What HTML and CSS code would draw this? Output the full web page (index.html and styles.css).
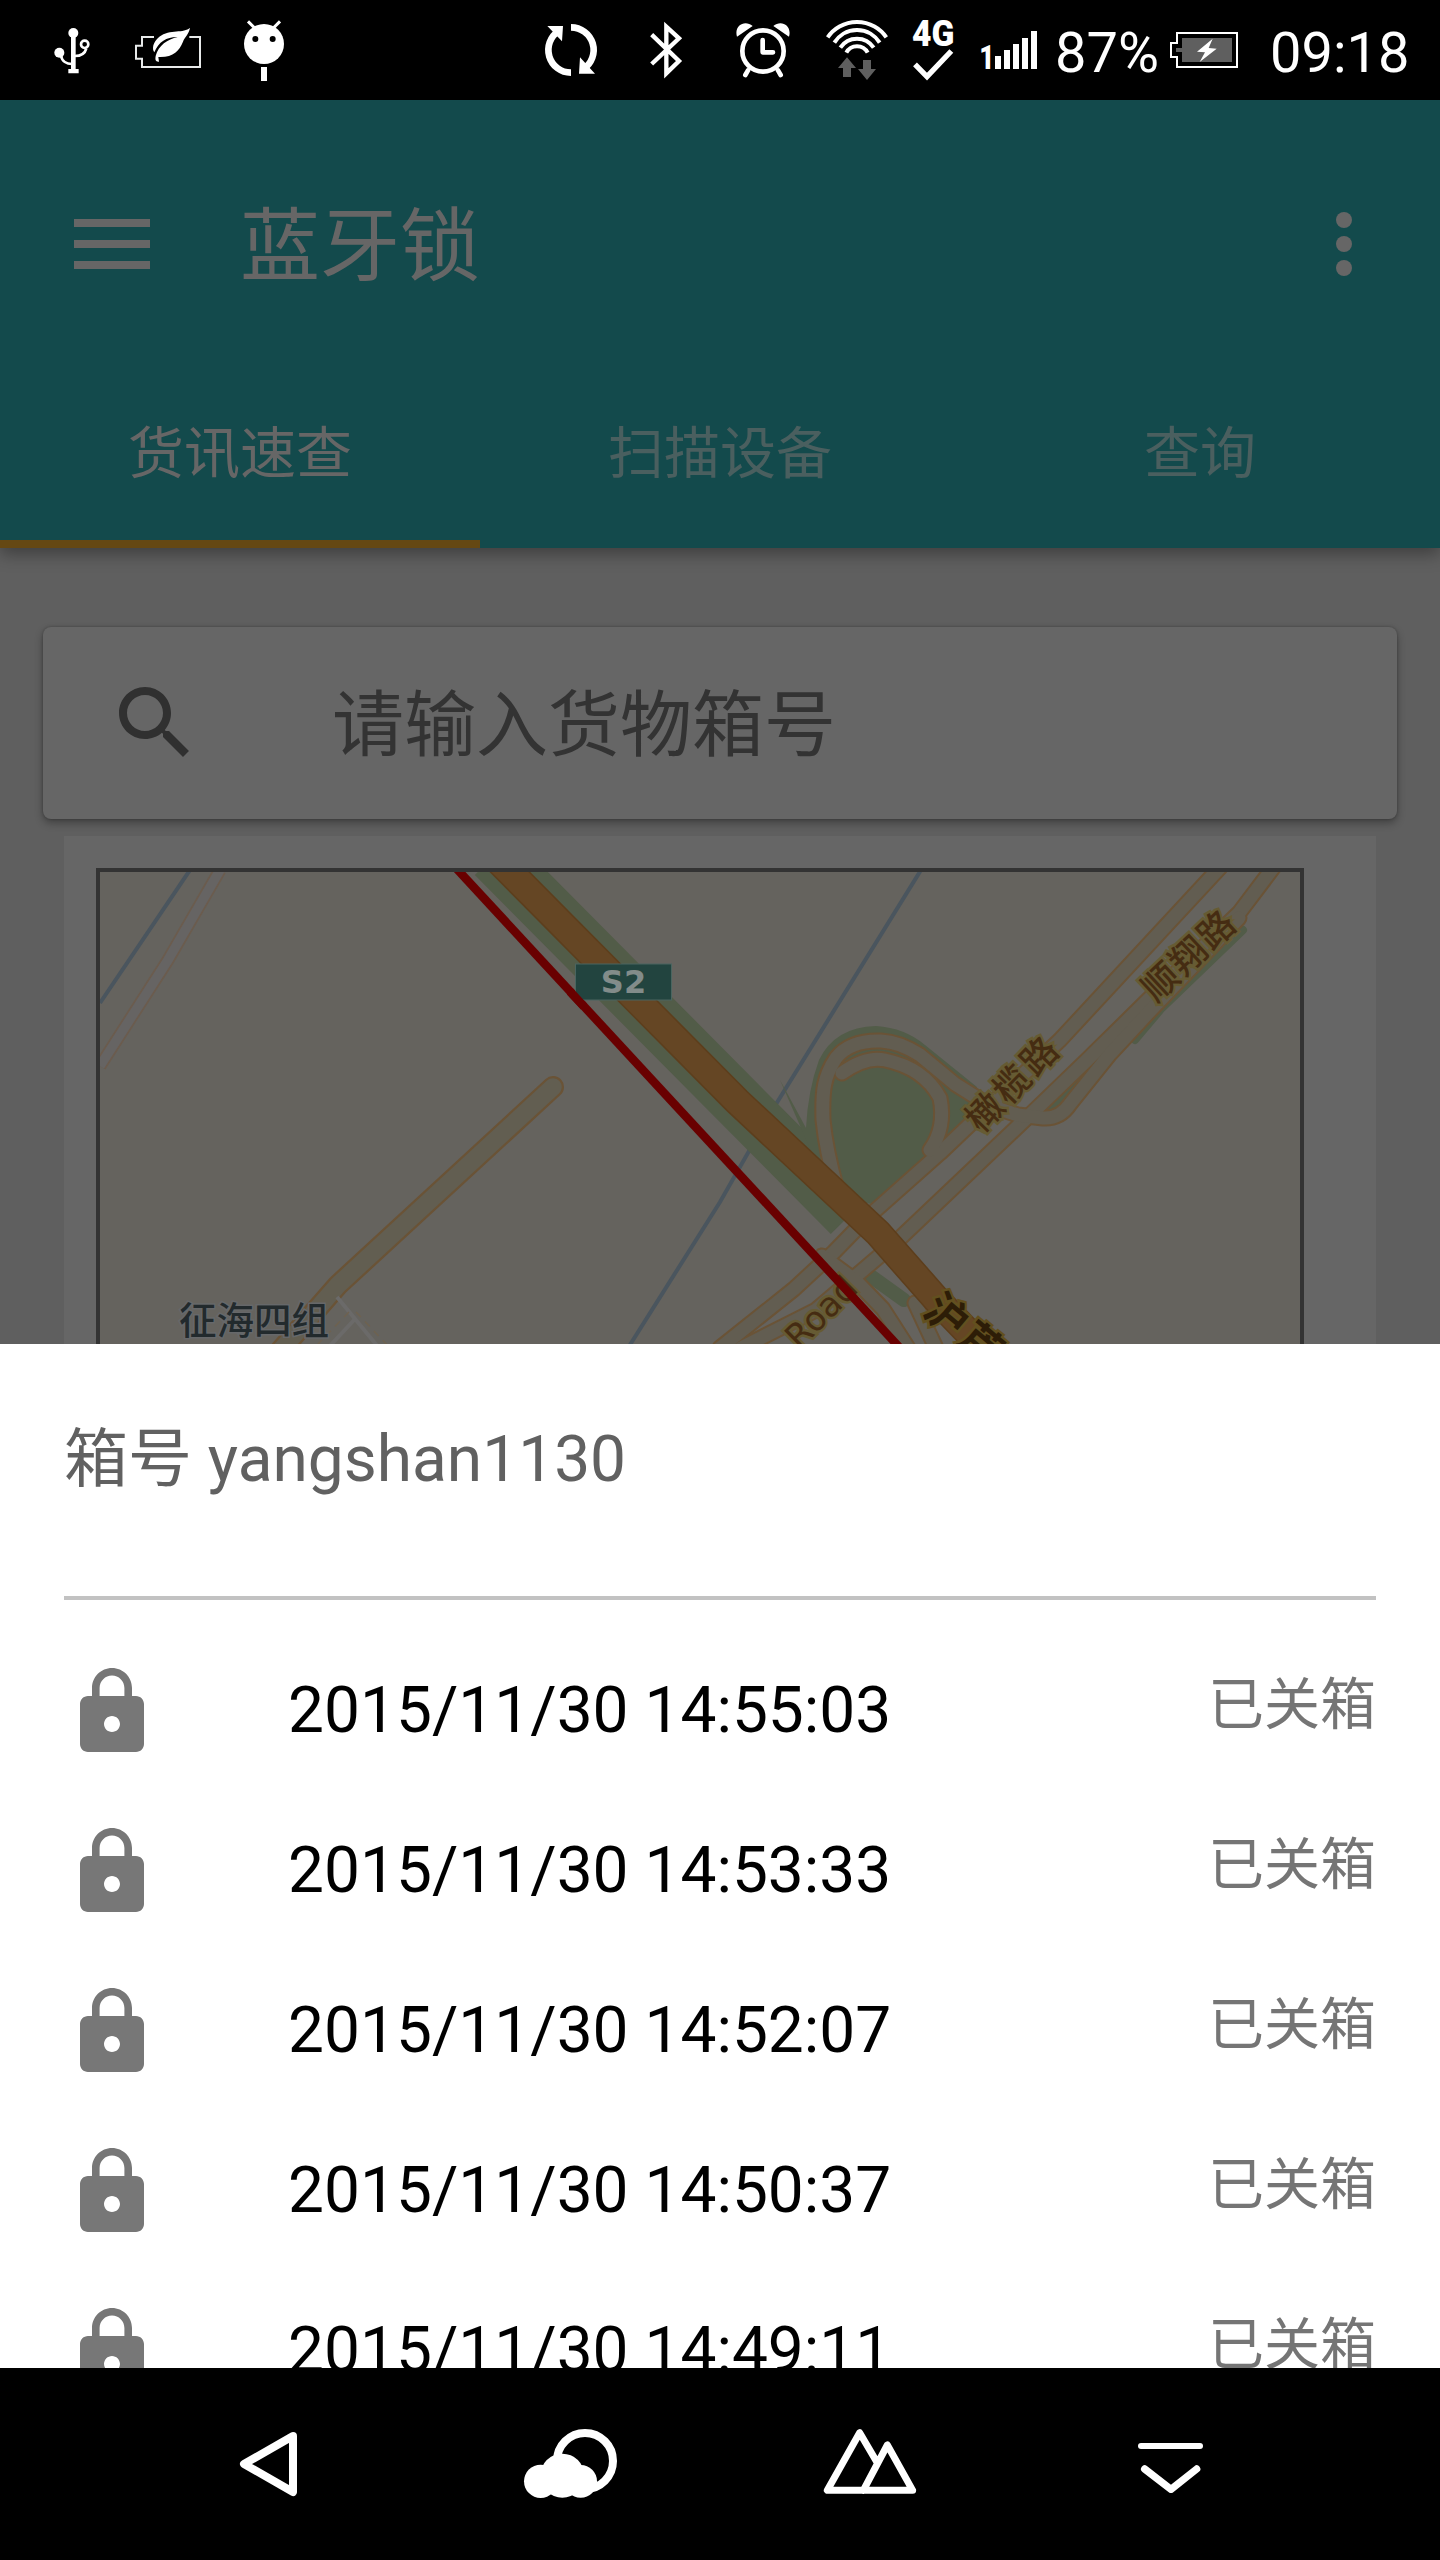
FILE: index.html
```html
<!DOCTYPE html>
<html lang="zh-CN">
<head>
<meta charset="utf-8">
<title>蓝牙锁</title>
<link rel="stylesheet" href="styles.css">
</head>
<body>
<svg class="defs" width="0" height="0" aria-hidden="true">
  <symbol id="lock" viewBox="0 0 24 24"><path d="M18 8h-1V6c0-2.76-2.24-5-5-5S7 3.24 7 6v2H6c-1.1 0-2 .9-2 2v10c0 1.1.9 2 2 2h12c1.1 0 2-.9 2-2V10c0-1.1-.9-2-2-2zm-6 9c-1.1 0-2-.9-2-2s.9-2 2-2 2 .9 2 2-.9 2-2 2zm3.1-9H8.9V6c0-1.71 1.39-3.1 3.1-3.1s3.1 1.39 3.1 3.1v2z"/></symbol>
</svg>
<div class="screen">
  <header class="status">
    <svg width="110" height="100" viewBox="0 0 330 300" fill="#fff">
      <circle cx="220" cy="99" r="15"/><circle cx="178" cy="158" r="15"/>
      <path d="M213 99h14v108h9v13h-31v-13h8z"/>
      <g fill="none" stroke="#fff" stroke-width="8"><circle cx="254" cy="133" r="11"/><path d="M183 167C186 184 200 192 216 192M259 145C255 161 241 168 224 168"/></g>
    </svg>
    <svg width="110" height="100" viewBox="330 0 330 300">
      <path d="M462 111H426V137H408V176H426V201H600V111H568" fill="none" stroke="#e8eaea" stroke-width="6"/>
      <path fill="#fff" d="M570 83C552 101 510 86 478 110C457 127 456 148 463 157C476 124 502 110 533 111C503 118 475 136 467 168C465 180 467 186 477 185L475 171C520 173 537 153 549 125C554 111 567 102 570 83z"/>
    </svg>
    <svg width="280" height="100" viewBox="660 0 840 300" fill="#fff">
      <circle cx="792" cy="132" r="60"/><path d="M744 64L770 90M840 64L814 90" stroke="#fff" stroke-width="9"/>
      <circle cx="766" cy="117" r="9" fill="#000"/><circle cx="818" cy="117" r="9" fill="#000"/><path d="M783 201h18v42h-18z"/>
    </svg>
    <svg width="120" height="100" viewBox="0 0 360 300" fill="#fff">
      <path d="M213 82A68 68 0 0 1 250 207M213 218A68 68 0 0 1 176 93" fill="none" stroke="#fff" stroke-width="20"/>
      <path d="M240 172L285 221H237zM142 78H189L186 124z"/>
    </svg>
    <svg width="90" height="100" viewBox="360 0 270 300">
      <path d="M455 104L537 183L499 220V80L537 115L455 192" fill="none" stroke="#fff" stroke-width="13"/>
    </svg>
    <svg width="100" height="100" viewBox="630 0 300 300">
      <g fill="none" stroke="#fff" stroke-width="14" stroke-linecap="round" stroke-linejoin="round"><circle cx="789" cy="153" r="62"/><path d="M788 120V157H819M744 211L736 225M834 211L842 225"/></g>
      <path fill="#fff" d="M711 110C701 76 735 58 758 78zM867 110C877 76 843 58 820 78z"/>
    </svg>
    <svg width="90" height="100" viewBox="930 0 270 300">
      <path d="M983 112A107 107 0 0 1 1159 112M1003 128A80 80 0 0 1 1139 128M1021 143A60 60 0 0 1 1121 143M1039 158A36 36 0 0 1 1103 158" fill="none" stroke="#fff" stroke-width="12"/>
      <path fill="#5f5f5f" d="M1041 172L1068 204H1053V231H1029V204H1014zM1089 180H1113V207H1128L1101 240L1074 207H1089z"/>
    </svg>
    <svg width="60" height="100" viewBox="1200 0 180 300">
      <text class="glyph" x="1236" y="138" font-size="108" font-weight="900" textLength="127" lengthAdjust="spacingAndGlyphs">4G</text>
      <path d="M1245 193L1281 230L1354 153" fill="none" stroke="#fff" stroke-width="16"/>
    </svg>
    <svg width="95" height="100" viewBox="0 0 285 300" fill="#fff">
      <text class="glyph" x="58" y="207" font-size="97" font-weight="900" textLength="46" lengthAdjust="spacingAndGlyphs">1</text>
      <path d="M105 168h18v39h-18zM132 150h18v57h-18zM159 132h18v75h-18zM186 114h18v93h-18zM213 93h18v114h-18z"/>
    </svg>
    <span class="level">87%</span>
    <svg width="110" height="100" viewBox="600 0 330 300">
      <path d="M651 99H831V201H651V171H633V129H651z" fill="none" stroke="#fff" stroke-width="6"/>
      <path fill="#5f5f5f" d="M666 114h150v72H666zM648 144h20v12h-20z"/>
      <path fill="#fff" d="M758 116L711 155L735 157L719 186L770 146L746 144z"/>
    </svg>
    <span class="clock">09:18</span>
  </header>

  <div class="appbar">
    <div class="toolbar">
      <span class="menu"><i></i><i></i><i></i></span>
      <h1>蓝牙锁</h1>
      <span class="more"><i></i><i></i><i></i></span>
    </div>
    <nav class="tabs"><span class="tab active">货讯速查</span><span class="tab">扫描设备</span><span class="tab">查询</span></nav>
  </div>

  <main class="content">
    <div class="search">
      <svg width="96" height="96" viewBox="0 0 24 24" fill="#303030"><path d="M15.5 14h-.79l-.28-.27C15.41 12.59 16 11.11 16 9.5 16 5.91 13.09 3 9.5 3S3 5.91 3 9.5 5.91 16 9.5 16c1.61 0 3.09-.59 4.23-1.57l.27.28v.79l5 4.99L20.49 19l-4.99-5zm-6 0C7.01 14 5 11.99 5 9.5S7.01 5 9.5 5 14 7.01 14 9.5 11.99 14 9.5 14z"/></svg>
      <span>请输入货物箱号</span>
    </div>
    <div class="mapcard">
      <svg class="map" width="1200" height="476" viewBox="100 872 1200 476">
        <defs>
          <g id="roads">
            <path d="M1219.5 868L1060 1040L1000 1096L940 1153L869 1216L834 1252L794 1289L720 1348" />
            <path d="M1273 868L1239 913L1149 999L1087 1060L1032 1113L897 1241L856 1276L816 1310L741 1348"/>
            <path d="M1239 918L1149 1012L1110 1054L1070 1104Q1060 1119 1043 1118L1018 1115L990 1106L955 1084L920 1055Q900 1042 881 1041Q850 1040 836 1058C824 1076 822 1090 823 1120Q826 1150 837 1190"/>
            <path d="M842 1073Q866 1056 885 1060Q924 1068 940 1098Q946 1128 930 1150"/>
            <path d="M822 1256L856 1281L883 1309L908 1348"/><path d="M915 1303L936 1348"/>
          </g>
        </defs>
        <rect x="100" y="872" width="1200" height="476" fill="#65635e"/>
        <g fill="none" stroke="#4a555e" stroke-width="4"><path d="M190 870L100 1003M921 870L773 1109L720 1202L628 1348"/></g>
        <path d="M220 870L168 960L100 1066" fill="none" stroke="#6b5c4e" stroke-width="13"/>
        <path d="M220 870L168 960L100 1066" fill="none" stroke="#666463" stroke-width="9.5"/>
        <path d="M494 856L736 1100L850 1215" fill="none" stroke="#525c48" stroke-width="54"/>
        <g fill="#525c48">
          <path d="M780 1080L806 1128Q808 1090 819 1060Q835 1027 876 1026Q905 1028 925 1045L977 1087L965 1128L935 1155L890 1200Q866 1212 848 1190L815 1160z"/>
          <path d="M1040 1114L1080 1078Q1082 1100 1055 1116z"/>
        </g>
        <path d="M811 1157L827 1165L838 1192L800 1165z" fill="#65635e"/>
        <path d="M1135 1040L1162 1008L1243 930" fill="none" stroke="#525c48" stroke-width="8" stroke-linecap="round"/>
        <path d="M872 1277L904 1300" fill="none" stroke="#525c48" stroke-width="14" stroke-linecap="round"/>
        <g fill="none" stroke-linejoin="round" stroke-linecap="round">
          <g stroke="#6a5336" stroke-width="17"><use href="#roads"/></g>
          <path d="M553 1087L338 1285L281 1350" stroke="#6a5336" stroke-width="22"/>
          <g stroke="#625d51" stroke-width="13"><use href="#roads"/></g>
          <path d="M553 1087L338 1285L281 1350" stroke="#625e51" stroke-width="17.5"/>
        </g>
        <path d="M337 1297L379 1348M355 1319L328 1348" fill="none" stroke="#6b6a69" stroke-width="4"/>
        <path d="M356 1312L390 1348M349 1312L318 1344" fill="none" stroke="#6e6250" stroke-width="1.5" stroke-dasharray="7 6"/>
        <path d="M498 860L737 1101L878 1233L936 1299L985 1350" fill="none" stroke="#5d3e1c" stroke-width="29"/>
        <path d="M498 860L737 1101L878 1233L936 1299L985 1350" fill="none" stroke="#654624" stroke-width="26"/>
        <g class="roadname">
          <text transform="translate(1013 1083) rotate(-46)" y="13" font-size="36" letter-spacing="3">橄榄路</text>
          <text transform="translate(1189 955) rotate(-43)" y="13" font-size="36" letter-spacing="2">顺翔路</text>
          <text class="latin" transform="translate(821 1312) rotate(-45)" y="12" font-size="34">Road</text>
          <text class="dark" transform="translate(965 1331) rotate(40)" y="15" font-size="42" letter-spacing="3">沪芦</text>
        </g>
        <path d="M456 868L900 1348" stroke="#690000" stroke-width="8.5"/>
        <rect x="575.5" y="964" width="96" height="36" fill="#22443f" stroke="#4a6560" stroke-width="1"/>
        <text class="shield" x="623.5" y="993">S2</text>
        <path d="M570 991.5L584 1006.6" stroke="#690000" stroke-width="8.5"/>
        <text class="place" x="179" y="1334">征海四组</text>
      </svg>
    </div>
  </main>

  <section class="sheet">
    <h2>箱号 yangshan1130</h2>
    <ul>
      <li><svg><use href="#lock"/></svg><time>2015/11/30 14:55:03</time><em>已关箱</em></li>
      <li><svg><use href="#lock"/></svg><time>2015/11/30 14:53:33</time><em>已关箱</em></li>
      <li><svg><use href="#lock"/></svg><time>2015/11/30 14:52:07</time><em>已关箱</em></li>
      <li><svg><use href="#lock"/></svg><time>2015/11/30 14:50:37</time><em>已关箱</em></li>
      <li><svg><use href="#lock"/></svg><time>2015/11/30 14:49:11</time><em>已关箱</em></li>
    </ul>
  </section>

  <footer class="navbar">
    <svg width="400" height="192" viewBox="-600 84 1200 576"><path d="M279 288L132 372L279 456z" stroke-width="24"/></svg>
    <svg width="300" height="192" viewBox="600 84 900 576"><circle cx="1155" cy="363" r="84" stroke-width="24"/><g fill="#fff" stroke="none"><circle cx="1022" cy="424" r="50"/><circle cx="1087" cy="407" r="66"/><circle cx="1142" cy="424" r="49"/></g></svg>
    <svg width="320" height="192" viewBox="-240 84 960 576"><path d="M290 365L239 278L142 451H398L322 315L250 451" stroke-width="21"/></svg>
    <svg width="420" height="192" viewBox="720 84 1260 576"><path d="M1083 318H1260" stroke-width="18"/><path d="M1094 387L1173 448L1250 387" stroke-width="22"/></svg>
  </footer>
</div>
</body>
</html>
```
FILE: styles.css
```css
* { box-sizing: border-box; }
body { margin: 0; background: #000; }
.defs { position: absolute; }
.screen {
  width: 1440px; height: 2560px; overflow: hidden;
  display: flex; flex-direction: column;
  font-family: Roboto, "Noto Sans CJK SC", sans-serif;
}
.screen svg { display: block; flex: none; }
h1, h2, ul { margin: 0; padding: 0; font-weight: 400; }
i, em { font-style: normal; }

.status { display: flex; height: 100px; flex: none; background: #000; color: #fff; font-size: 56px; line-height: 106px; white-space: nowrap; }
.glyph { font-family: Roboto, sans-serif; fill: #fff; }
.level { width: 105px; }
.clock { width: 150px; }

.appbar { flex: none; height: 448px; padding-top: 32px; background: #134a4c; position: relative; z-index: 1; box-shadow: 0 6px 16px rgba(0, 0, 0, .35); }
.toolbar { display: flex; align-items: center; height: 224px; padding: 0 88px 0 74px; color: #666; }
.menu { display: flex; flex-direction: column; gap: 13px; width: 76px; margin-right: 90px; }
.menu i { height: 8px; background: #666; }
.toolbar h1 { flex: 1; padding-top: 6px; font-size: 80px; line-height: 96px; }
.more { display: flex; flex-direction: column; gap: 8px; }
.more i { width: 16px; height: 16px; border-radius: 50%; background: #666; }
.tabs { display: grid; grid-template-columns: repeat(3, 1fr); height: 192px; }
.tab { height: 192px; padding-top: 4px; text-align: center; font-size: 56px; line-height: 188px; color: #4a5f5f; }
.tab.active { color: #666; border-bottom: 8px solid #654813; }

.content { flex: none; height: 796px; overflow: hidden; padding-top: 79px; background: #5f5f5f; }
.search { display: flex; align-items: center; gap: 129px; height: 192px; margin: 0 43px; padding-left: 64px; border-radius: 8px; background: #666; box-shadow: 0 4px 9px rgba(0, 0, 0, .32), 0 0 3px rgba(0, 0, 0, .25); color: #333; font-size: 72px; line-height: 96px; }
.search span { padding-top: 6px; }
.mapcard { margin: 17px 64px 0; padding: 32px; height: 600px; background: #666; }
.map { box-sizing: content-box; border: 4px solid #333; }
.map text { font-family: "Noto Sans CJK SC", sans-serif; }
.map .roadname text { text-anchor: middle; fill: #452c12; stroke: #665b33; stroke-width: 5px; paint-order: stroke; font-weight: 500; }
.map .roadname .latin, .map .shield { font-family: "DejaVu Sans", sans-serif; }
.map .roadname .dark { fill: #2d1d07; stroke: #62501f; font-weight: 700; }
.map .shield { font-size: 32px; font-weight: 700; text-anchor: middle; fill: #828c8a; }
.map .place { font-size: 37.5px; font-weight: 500; fill: #222a2d; stroke: #66686a; stroke-width: 3px; paint-order: stroke; }

.sheet { flex: none; height: 1024px; overflow: hidden; background: #fff; padding: 0 64px; }
.sheet h2 { height: 256px; border-bottom: 4px solid #c2c2c2; color: #616161; font-size: 64px; line-height: 232px; }
.sheet ul { list-style: none; padding-top: 32px; }
.sheet li { display: flex; align-items: center; height: 160px; }
.sheet li svg { width: 96px; height: 96px; fill: #777; }
.sheet time { flex: 1; margin-left: 128px; padding-bottom: 2px; color: #000; font-size: 64px; line-height: 96px; }
.sheet em { color: #757575; font-size: 56px; line-height: 84px; padding-bottom: 14px; }

.navbar { flex: none; display: flex; height: 192px; background: #000; }
.navbar svg { fill: none; stroke: #fff; stroke-linecap: round; stroke-linejoin: round; }
```
